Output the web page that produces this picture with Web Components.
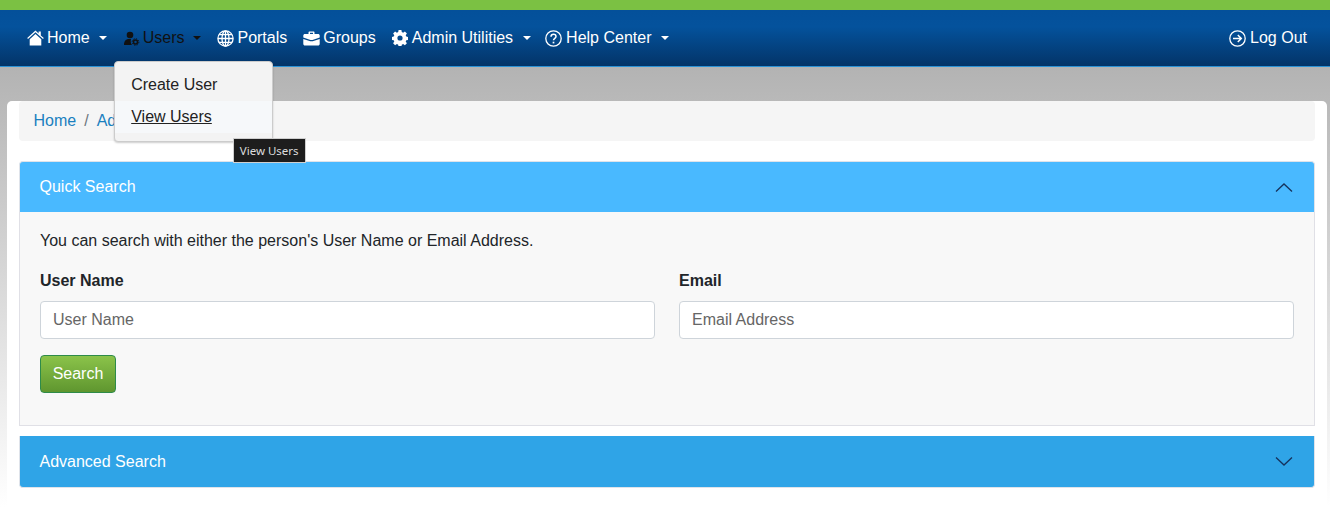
<!DOCTYPE html>
<html>
<head>
<meta charset="utf-8">
<title>Quick Search</title>
<style>
  html, body { margin: 0; height: 507px; overflow: hidden; background: #fff; }
  body { font-family: "Liberation Sans", Arial, sans-serif; font-size: 16px; color: #212529; }
</style>
</head>
<body>
<app-shell>
  <top-nav slot="nav">
    <nav-item icon="home" caret style="margin-right:1px">Home</nav-item>
    <nav-item icon="users" caret dark>Users
      <drop-menu slot="menu"></drop-menu>
    </nav-item>
    <nav-item icon="globe">Portals</nav-item>
    <nav-item icon="case">Groups</nav-item>
    <nav-item icon="gear" caret gap="4" style="margin-right:-2px">Admin Utilities</nav-item>
    <nav-item icon="help" caret gap="4">Help Center</nav-item>
    <nav-item icon="logout" gap="4" slot="right">Log Out</nav-item>
  </top-nav>
  <crumb-bar></crumb-bar>
  <search-panel heading="Quick Search" color="#49b9ff" open>
    <quick-form></quick-form>
  </search-panel>
  <search-panel heading="Advanced Search" color="#2fa4e7"></search-panel>
</app-shell>

<script>
const ICONS = {
  home: '<svg width="17" height="16" viewBox="0 0 17 16"><path fill="#fff" d="M8.500 .6 .2 8.100l.8.9 7.500-6.800L16 9l.8-.9-3-2.700V1.500h-2.200v1.900zM2.700 9.300 8.500 4l5.800 5.300V15.500H2.700z"/></svg>',
  users: '<svg width="16" height="15" viewBox="0 0 16 15"><circle cx="6" cy="4" r="3.300" fill="#111"/><path fill="#111" d="M0 14c0-4 2-6 5-6h2c-.6 1.800-.4 4.400 1 6z"/><circle cx="11.500" cy="11" r="2" fill="none" stroke="#111" stroke-width="1.500"/><circle cx="11.500" cy="11" r="3.300" fill="none" stroke="#111" stroke-width="1" stroke-dasharray="1.300 1.290"/></svg>',
  globe: '<svg width="17" height="17" viewBox="0 0 17 17" fill="none" stroke="#fff" stroke-width="1.300"><circle cx="8.500" cy="8.500" r="7.600"/><ellipse cx="8.500" cy="8.500" rx="3.500" ry="7.600"/><path d="M8.500 1v15M1 8.500h15M2 4.700h13M2 12.300h13"/></svg>',
  case: '<svg width="17" height="15" viewBox="0 0 17 15"><path fill="#fff" fill-rule="evenodd" d="M5.500 3V1.500C5.500.9 6 .5 6.500.5h4c.6 0 1 .4 1 1V3H15c1 0 1.700.7 1.700 1.500V6.600L9.500 9H7.500L.3 6.600V4.500C.3 3.700 1 3 2 3zM7 1.800V3h3V1.800z"/><path fill="#fff" d="M.3 7.900 7.300 10.200h2.400l7-2.300V13c0 .9-.7 1.500-1.700 1.500H2c-1 0-1.700-.6-1.700-1.500z"/></svg>',
  gear: '<svg width="16" height="16" viewBox="0 0 16 16"><path fill="#fff" fill-rule="evenodd" d="M6.600 0h2.800l.4 2.100 1.300.6 1.800-1.200 2 2-1.200 1.800.6 1.300 2.100.4v2.800l-2.100.4-.6 1.300 1.200 1.800-2 2-1.800-1.200-1.300.6-.4 2.100H6.600l-.4-2.100-1.300-.6-1.800 1.200-2-2 1.200-1.800-.6-1.300L-.4 9.800V7l2.100-.4.6-1.300-1.200-1.800 2-2 1.800 1.200 1.300-.6zM8 5.400a2.600 2.600 0 1 0 0 5.200 2.600 2.600 0 0 0 0-5.200z"/></svg>',
  help: '<svg width="17" height="17" viewBox="0 0 17 17" fill="none" stroke="#fff" stroke-width="1.300"><circle cx="8.500" cy="8.500" r="7.700"/><path stroke-width="1.500" d="M6 6.700c0-1.500 1.100-2.400 2.500-2.400S11 5.200 11 6.500c0 1.800-2.500 1.900-2.500 3.800"/><path stroke-width="1.700" d="M8.500 11.700v1.700"/></svg>',
  logout: '<svg width="17" height="17" viewBox="0 0 17 17" fill="none" stroke="#fff" stroke-width="1.300"><circle cx="8.500" cy="8.500" r="7.700"/><path stroke-width="1.500" d="M4 8.500h8M8.800 5l3.500 3.500L8.800 12"/></svg>'
};

class AppShell extends HTMLElement {
  constructor() {
    super();
    this.attachShadow({mode: 'open'});
    this.shadowRoot.innerHTML = `
      <style>
        :host { display: block; }
        .stripe { height: 10px; background: #7bc143; }
        .page {
          height: 440px;
          box-sizing: border-box;
          padding: 34px 3px 0 7px;
          background: linear-gradient(#b3b3b3, #fff);
        }
        .card {
          background: #fff;
          border-radius: 5px 5px 0 0;
          padding: 0 12px;
          height: 406px;
        }
      </style>
      <div class="stripe"></div>
      <slot name="nav"></slot>
      <div class="page"><div class="card"><slot></slot></div></div>
    `;
  }
}

class TopNav extends HTMLElement {
  constructor() {
    super();
    this.attachShadow({mode: 'open'});
    this.shadowRoot.innerHTML = `
      <style>
        :host {
          display: flex;
          align-items: center;
          justify-content: space-between;
          height: 57px;
          padding: 0 23px 0 27px;
          box-sizing: border-box;
          background: linear-gradient(#04509a, #04529c 30%, #033468);
          border-bottom: 1px solid #2a92d6;
        }
        .left { display: flex; align-items: center; gap: 16px; }
      </style>
      <div class="left"><slot></slot></div>
      <slot name="right"></slot>
    `;
  }
}

class NavItem extends HTMLElement {
  constructor() {
    super();
    this.attachShadow({mode: 'open'});
  }
  connectedCallback() {
    const color = this.hasAttribute('dark') ? '#111' : '#fff';
    const gap = this.getAttribute('gap') || 3;
    const caret = this.hasAttribute('caret')
      ? `<span class="caret" style="border-top-color:${color}"></span>` : '';
    this.shadowRoot.innerHTML = `
      <style>
        :host { display: block; position: relative; }
        .link {
          display: flex;
          align-items: center;
          gap: ${gap}px;
          color: ${color};
          font-size: 16px;
          line-height: 24px;
          white-space: nowrap;
        }
        svg { display: block; }
        .caret {
          width: 0;
          height: 0;
          margin-left: 6px;
          border-left: 4.800px solid transparent;
          border-right: 4.800px solid transparent;
          border-top: 4.800px solid;
        }
      </style>
      <div class="link">${ICONS[this.getAttribute('icon')]}<span><slot></slot></span>${caret}</div>
      <slot name="menu"></slot>
    `;
  }
}

class DropMenu extends HTMLElement {
  constructor() {
    super();
    this.attachShadow({mode: 'open'});
    this.shadowRoot.innerHTML = `
      <style>
        :host {
          display: block;
          position: absolute;
          left: -10px;
          top: 35px;
          width: 159px;
          height: 81px;
          box-sizing: border-box;
          padding: 7px 0 0;
          background: #f3f3f3;
          border: 1px solid #ccc;
          border-radius: 4px;
          box-shadow: 0 1px 2px rgba(0,0,0,.2);
          z-index: 5;
          font-size: 16px;
          color: #222;
        }
        div { height: 32px; line-height: 32px; padding-left: 16.500px; }
        .on { background: #f6f8fa; text-decoration: underline; }
        .tip {
          position: absolute;
          left: 118px;
          top: 76px;
          width: 73px;
          height: 25px;
          box-sizing: border-box;
          text-align: center;
          background: #1d1d1d;
          border: 1px solid #cfcfcf;
          color: #ddd;
          font: 11.500px/23px "Noto Sans", "Open Sans", sans-serif;
        }
      </style>
      <div>Create User</div>
      <div class="on">View Users</div>
      <span class="tip">View Users</span>
    `;
  }
}

class CrumbBar extends HTMLElement {
  constructor() {
    super();
    this.attachShadow({mode: 'open'});
    this.shadowRoot.innerHTML = `
      <style>
        :host {
          display: flex;
          align-items: center;
          gap: 8px;
          height: 40px;
          padding: 0 14.500px;
          background: #f5f5f5;
          border-radius: 4px;
          margin-bottom: 20px;
          color: #1a80bf;
          font-size: 16px;
        }
        .sep { color: #6c757d; }
      </style>
      <span>Home</span><span class="sep">/</span><span>Ad</span>
    `;
  }
}

class SearchPanel extends HTMLElement {
  constructor() {
    super();
    this.attachShadow({mode: 'open'});
  }
  connectedCallback() {
    const open = this.hasAttribute('open');
    const chevron = open ? 'M1 10.500 9 3 17 10.500' : 'M1 2.500 9 10 17 2.500';
    this.shadowRoot.innerHTML = `
      <style>
        :host { display: block; margin-bottom: 10px; }
        .head {
          display: flex;
          align-items: center;
          justify-content: space-between;
          height: ${open ? 51 : 52}px;
          box-sizing: border-box;
          padding: 0 21px 0 19.500px;
          background: ${this.getAttribute('color')};
          border: 1px solid #dfe3ea;
          border-width: ${open ? '1px 1px 0 1px' : '0 1px 1px 1px'};
          border-radius: ${open ? '4px 4px 0 0' : '0 0 4px 4px'};
          color: #fff;
          font-size: 16px;
        }
        svg { display: block; }
        .body {
          height: 214px;
          box-sizing: border-box;
          background: #f8f8f8;
          border: 1px solid #e0e0e6;
          border-top: 0;
        }
      </style>
      <div class="head">
        <span>${this.getAttribute('heading')}</span>
        <svg width="18" height="13" viewBox="0 0 18 13" fill="none" stroke="#16325c" stroke-width="1.300"><path d="${chevron}"/></svg>
      </div>
      ${open ? '<div class="body"><slot></slot></div>' : ''}
    `;
  }
}

class QuickForm extends HTMLElement {
  constructor() {
    super();
    this.attachShadow({mode: 'open'});
    this.shadowRoot.innerHTML = `
      <style>
        :host { display: block; padding: 19px 20px 0; font-size: 16px; color: #212529; }
        p { margin: 0 0 20px; line-height: 20px; }
        .grid { display: grid; grid-template-columns: 1fr 1fr; gap: 24px; margin-bottom: 16px; }
        label { display: block; font-weight: 700; line-height: 20px; margin-bottom: 10px; }
        input {
          display: block;
          width: 100%;
          height: 38px;
          box-sizing: border-box;
          padding: 0 12px;
          background: #fff;
          border: 1px solid #ced4da;
          border-radius: 4px;
          font: 16px "Liberation Sans", Arial, sans-serif;
        }
        input::placeholder { color: #666; opacity: 1; }
        button {
          display: block;
          width: 76px;
          height: 38px;
          padding: 0;
          background: linear-gradient(#8bc34a, #5f962f);
          border: 1px solid #2e8b4a;
          border-radius: 4px;
          color: #fff;
          font: 16px "Liberation Sans", Arial, sans-serif;
        }
      </style>
      <p>You can search with either the person's User Name or Email Address.</p>
      <div class="grid">
        <div><label>User Name</label><input placeholder="User Name"></div>
        <div><label>Email</label><input placeholder="Email Address"></div>
      </div>
      <button>Search</button>
    `;
  }
}

customElements.define('app-shell', AppShell);
customElements.define('top-nav', TopNav);
customElements.define('nav-item', NavItem);
customElements.define('drop-menu', DropMenu);
customElements.define('crumb-bar', CrumbBar);
customElements.define('search-panel', SearchPanel);
customElements.define('quick-form', QuickForm);
</script>
</body>
</html>
